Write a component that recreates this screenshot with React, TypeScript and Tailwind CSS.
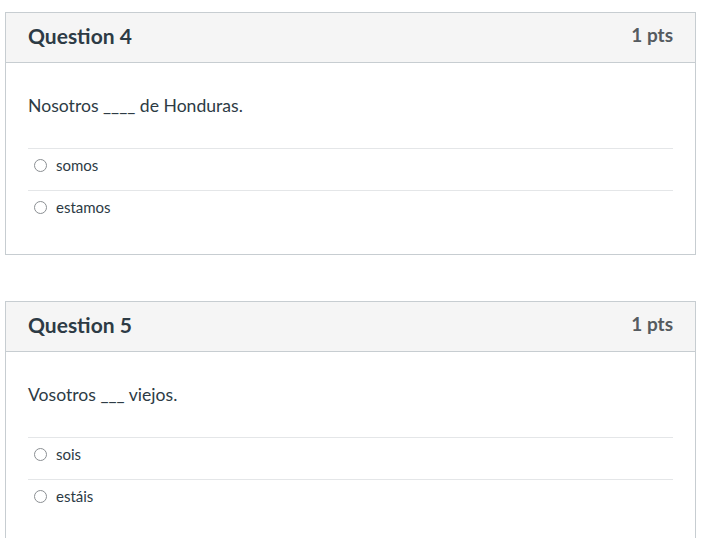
import React from "react";

type Q = { n: number; text: string; options: string[] };

const questions: Q[] = [
  { n: 4, text: "Nosotros ____ de Honduras.", options: ["somos", "estamos"] },
  { n: 5, text: "Vosotros ___ viejos.", options: ["sois", "estáis"] },
];

function Card({ q }: { q: Q }) {
  return (
    <div className="ml-[5px] w-[691px] border border-[#c7cdd1] bg-white">
      <div className="flex h-[50px] items-center justify-between border-b border-[#c7cdd1] bg-[#f5f5f5] px-[22px] pb-[4px]">
        <span className="text-[21px] font-bold text-[#2d3b45]">Question {q.n}</span>
        <span className="text-[19px] font-bold text-[#555b60]">1 pts</span>
      </div>
      <div className="px-[22px] pt-[30px] pb-[22px]">
        <div className="text-[17.6px] leading-[26px] text-[#2d3b45]">{q.text}</div>
        <div className="mt-[29px]">
          {q.options.map((o) => (
            <div key={o} className="flex items-center border-t border-[#e4e6e8] pt-[5px] pb-[14px]">
              <span className="ml-[6px] mr-[9px] block h-[13px] w-[13px] rounded-full border border-[#8b8f93] bg-white" />
              <span className="text-[15px] leading-[22px] text-[#2d3b45]">{o}</span>
            </div>
          ))}
        </div>
      </div>
    </div>
  );
}

export default function App() {
  return (
    <div className="min-h-[538px] bg-white pt-[12px]" style={{ fontFamily: "Lato, 'Liberation Sans', sans-serif" }}>
      <div className="flex flex-col gap-[46px]">
        {questions.map((q) => (
          <Card key={q.n} q={q} />
        ))}
      </div>
    </div>
  );
}
